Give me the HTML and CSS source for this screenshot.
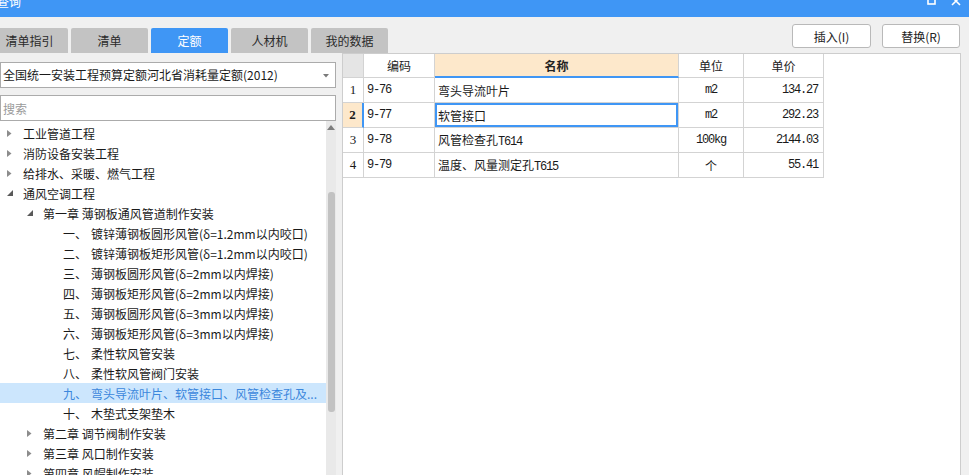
FILE: index.html
```html
<!DOCTYPE html>
<html lang="zh">
<head>
<meta charset="utf-8">
<title>查询</title>
<link rel="stylesheet" href="styles.css">
</head>
<body>
<div class="titlebar">
  <span class="title">查询</span>
  <div class="winbtns">
    <svg class="ico-max" width="9" height="9" viewBox="0 0 9 9"><rect x="1" y="1" width="7" height="7" fill="none" stroke="#fff" stroke-width="1.6"/></svg>
    <svg class="ico-close" width="10" height="10" viewBox="0 0 10 10"><path d="M1 1 L9 9 M9 1 L1 9" stroke="#fff" stroke-width="1.6"/></svg>
  </div>
</div>
<div class="toolbar">
  <div class="tabs">
    <div class="tab">清单指引</div>
    <div class="tab">清单</div>
    <div class="tab active">定额</div>
    <div class="tab">人材机</div>
    <div class="tab">我的数据</div>
  </div>
  <div class="actions">
    <button class="btn b1">插入(I)</button>
    <button class="btn b2">替换(R)</button>
  </div>
</div>
<div class="content">
  <div class="left">
    <div class="select">
      <span class="select-text">全国统一安装工程预算定额河北省消耗量定额(2012)</span>
      <svg class="select-arrow" width="6" height="4" viewBox="0 0 6 4"><polygon points="0,0 6,0 3,3.5" fill="#7a7a7a"/></svg>
    </div>
    <div class="search">搜索</div>
    <div class="tree">
      <div class="tree-list">
        <div class="row l0"><span class="tw"><svg width="5" height="7" viewBox="0 0 5 7"><polygon points="0,0 4.5,3.5 0,7" fill="#8c8c8c"/></svg></span><span class="tx">工业管道工程</span></div>
        <div class="row l0"><span class="tw"><svg width="5" height="7" viewBox="0 0 5 7"><polygon points="0,0 4.5,3.5 0,7" fill="#8c8c8c"/></svg></span><span class="tx">消防设备安装工程</span></div>
        <div class="row l0"><span class="tw"><svg width="5" height="7" viewBox="0 0 5 7"><polygon points="0,0 4.5,3.5 0,7" fill="#8c8c8c"/></svg></span><span class="tx">给排水、采暖、燃气工程</span></div>
        <div class="row l0"><span class="tw"><svg width="6" height="6" viewBox="0 0 6 6"><polygon points="6,0 6,6 0,6" fill="#595959"/></svg></span><span class="tx">通风空调工程</span></div>
        <div class="row l1"><span class="tw"><svg width="6" height="6" viewBox="0 0 6 6"><polygon points="6,0 6,6 0,6" fill="#595959"/></svg></span><span class="tx">第一章 薄钢板通风管道制作安装</span></div>
        <div class="row l2"><span class="num">一、</span><span class="tx">镀锌薄钢板圆形风管(δ=1.2mm以内咬口)</span></div>
        <div class="row l2"><span class="num">二、</span><span class="tx">镀锌薄钢板矩形风管(δ=1.2mm以内咬口)</span></div>
        <div class="row l2"><span class="num">三、</span><span class="tx">薄钢板圆形风管(δ=2mm以内焊接)</span></div>
        <div class="row l2"><span class="num">四、</span><span class="tx">薄钢板矩形风管(δ=2mm以内焊接)</span></div>
        <div class="row l2"><span class="num">五、</span><span class="tx">薄钢板圆形风管(δ=3mm以内焊接)</span></div>
        <div class="row l2"><span class="num">六、</span><span class="tx">薄钢板矩形风管(δ=3mm以内焊接)</span></div>
        <div class="row l2"><span class="num">七、</span><span class="tx">柔性软风管安装</span></div>
        <div class="row l2"><span class="num">八、</span><span class="tx">柔性软风管阀门安装</span></div>
        <div class="row l2 selected"><span class="num">九、</span><span class="tx">弯头导流叶片、软管接口、风管检查孔及...</span></div>
        <div class="row l2"><span class="num">十、</span><span class="tx">木垫式支架垫木</span></div>
        <div class="row l1"><span class="tw"><svg width="5" height="7" viewBox="0 0 5 7"><polygon points="0,0 4.5,3.5 0,7" fill="#8c8c8c"/></svg></span><span class="tx">第二章 调节阀制作安装</span></div>
        <div class="row l1"><span class="tw"><svg width="5" height="7" viewBox="0 0 5 7"><polygon points="0,0 4.5,3.5 0,7" fill="#8c8c8c"/></svg></span><span class="tx">第三章 风口制作安装</span></div>
        <div class="row l1"><span class="tw"><svg width="5" height="7" viewBox="0 0 5 7"><polygon points="0,0 4.5,3.5 0,7" fill="#8c8c8c"/></svg></span><span class="tx">第四章 风帽制作安装</span></div>
      </div>
      <div class="scrollbar">
        <svg class="sb-up" width="8" height="5" viewBox="0 0 8 5"><polygon points="0,5 8,5 4,0" fill="#7d7d7d"/></svg>
        <div class="sb-thumb"></div>
      </div>
    </div>
  </div>
  <div class="right">
    <div class="grid">
      <div class="c h rn"></div>
      <div class="c h">编码</div>
      <div class="c h sel-col">名称</div>
      <div class="c h">单位</div>
      <div class="c h">单价</div>

      <div class="c rn">1</div>
      <div class="c code mono">9-76</div>
      <div class="c name"><span>弯头导流叶片</span></div>
      <div class="c unit mono">m2</div>
      <div class="c price mono">134.27</div>

      <div class="c rn cur">2</div>
      <div class="c code mono">9-77</div>
      <div class="c name cur-cell"><span>软管接口</span></div>
      <div class="c unit mono">m2</div>
      <div class="c price mono">292.23</div>

      <div class="c rn">3</div>
      <div class="c code mono">9-78</div>
      <div class="c name"><span>风管检查孔<span class="mono">T614</span></span></div>
      <div class="c unit mono">100kg</div>
      <div class="c price mono">2144.03</div>

      <div class="c rn">4</div>
      <div class="c code mono">9-79</div>
      <div class="c name"><span>温度、风量测定孔<span class="mono">T615</span></span></div>
      <div class="c unit">个</div>
      <div class="c price mono">55.41</div>
    </div>
  </div>
</div>
</body>
</html>
```
FILE: styles.css
```css
* { box-sizing: border-box; }
html, body { margin: 0; padding: 0; }
body {
  width: 969px;
  height: 475px;
  overflow: hidden;
  background: #f0f0f0;
  font-family: "Noto Sans CJK SC", "Noto Sans", sans-serif;
  font-size: 12px;
  color: #1a1a1a;
}

/* title bar */
.titlebar {
  height: 17px;
  background: #3f96f5;
  display: flex;
  justify-content: space-between;
  overflow: hidden;
}
.title {
  color: #fff;
  font-size: 12px;
  line-height: 12px;
  margin-top: -4px;
  margin-left: -3px;
}
.winbtns {
  display: flex;
  align-items: flex-start;
  gap: 15px;
  margin-right: 8px;
  margin-top: -4px;
}

/* toolbar */
.toolbar {
  height: 36px;
  display: flex;
  justify-content: space-between;
}
.tabs {
  display: flex;
  gap: 3px;
  margin-left: -9px;
  align-self: flex-end;
}
.tab {
  width: 77px;
  height: 25px;
  background: #c3c3c3;
  border-radius: 2px 2px 0 0;
  display: flex;
  align-items: center;
  justify-content: center;
  color: #2a2a2a;
  font-size: 12px;
}
.tab.active { background: #3f96f5; color: #fff; }
.actions {
  display: flex;
  gap: 11px;
  margin-top: 7px;
  margin-right: 9px;
}
.btn {
  height: 24px;
  background: #fff;
  border: 1px solid #b9b9b9;
  border-radius: 3px;
  font-family: "Noto Sans CJK SC", "Noto Sans", sans-serif;
  font-size: 12px;
  color: #222;
  padding: 0;
}
.b1 { width: 79px; }
.b2 { width: 78px; }

/* content */
.content {
  height: 422px;
  display: flex;
}
.left {
  width: 336px;
  display: flex;
  flex-direction: column;
  padding-top: 9px;
}
.select {
  height: 26px;
  background: #fff;
  border: 1px solid #ababab;
  display: flex;
  align-items: center;
  justify-content: space-between;
  padding: 0 6px 0 2px;
}
.select-text { line-height: 16px; }
.select-arrow { margin-top: 1px; }
.search {
  margin-top: 7px;
  height: 26px;
  background: #fff;
  border: 1px solid #ababab;
  color: #9a9a9a;
  display: flex;
  align-items: center;
  padding-left: 2px;
}
.tree {
  flex: 1;
  background: #fff;
  display: flex;
  overflow: hidden;
}
.tree-list {
  width: 326px;
  padding-top: 2px;
}
.row {
  height: 20px;
  display: flex;
  align-items: center;
  white-space: nowrap;
  color: #1a1a1a;
}
.row.l1 { padding-left: 20px; }
.row.l2 { padding-left: 63px; }
.tw {
  width: 23px;
  display: flex;
  align-items: center;
  padding-left: 7px;
}
.num { width: 28px; }
.row.selected { background: #cce6fd; color: #3b87dc; }
.scrollbar {
  width: 10px;
  background: #e9e9e9;
  display: flex;
  flex-direction: column;
  align-items: center;
}
.sb-up { margin-top: 4px; }
.sb-thumb {
  width: 7px;
  height: 220px;
  margin-top: 62px;
  background: #c2c2c2;
  border-radius: 3px;
}

/* right panel */
.right {
  margin-left: 6px;
  width: 619px;
  background: #fff;
  border: 1px solid #cdcdcd;
  border-bottom: none;
}
.grid {
  display: grid;
  grid-template-columns: 21px 71px 244px 65px 80px;
  grid-template-rows: 24px repeat(4, 25px);
  width: 481px;
}
.c {
  border-right: 1px solid #d3d3d3;
  border-bottom: 1px solid #d3d3d3;
  display: flex;
  align-items: center;
  white-space: nowrap;
  overflow: hidden;
}
.h { justify-content: center; color: #222; }
.h.rn { background: #e5e5e5; }
.sel-col {
  background: #fde8cb;
  font-weight: bold;
  border-bottom: 2px solid #3f96f5;
}
.rn {
  justify-content: center;
  font-family: "Liberation Serif", serif;
  font-size: 13px;
}
.rn.cur {
  background: #fde8cb;
  font-weight: bold;
  border-right: 2px solid #3f96f5;
}
.mono {
  font-family: "Liberation Mono", monospace;
  font-size: 12px;
  letter-spacing: -1.2px;
}
.code { padding-left: 3px; }
.name { padding-left: 3px; }
.unit { justify-content: center; }
.price { justify-content: flex-end; padding-right: 5px; }
.cur-cell { box-shadow: inset 0 0 0 2px #3f96f5; }
```
